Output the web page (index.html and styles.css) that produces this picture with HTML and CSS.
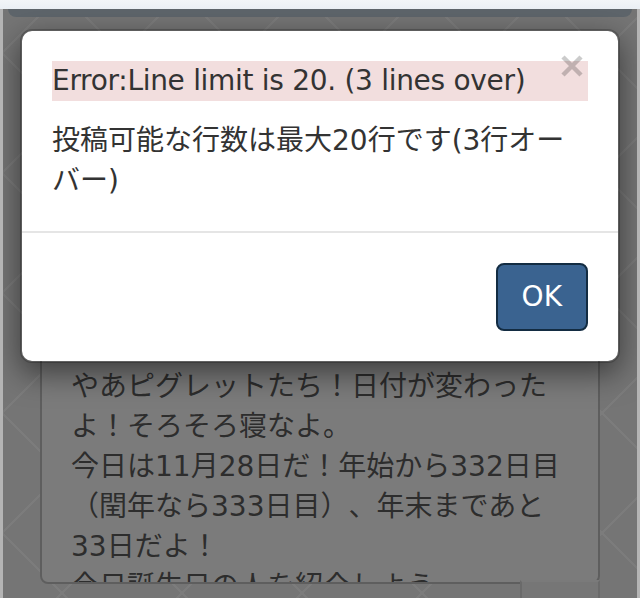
FILE: index.html
```html
<!DOCTYPE html>
<html lang="ja">
<head>
<meta charset="utf-8">
<title>Error</title>
<link rel="stylesheet" href="styles.css">
</head>
<body>
<div class="topstrip"></div>
<div class="page">
  <div class="navtail"></div>
  <main class="content">
    <div class="editor">
      <div class="textarea">やあピグレットたち！日付が変わったよ！そろそろ寝なよ。<br>今日は11月28日だ！年始から332日目（閏年なら333日目）、年末まであと33日だよ！<br>今日誕生日の人を紹介しよう</div>
      <div class="counter"></div>
    </div>
  </main>
  <div class="backdrop"></div>
  <div class="modal">
    <div class="modal-content">
      <div class="modal-header">
        <button class="close" type="button" aria-label="Close">
          <svg viewBox="0 0 22 22" width="22" height="22"><path d="M2 2L20 20M20 2L2 20" stroke="#000" stroke-width="4.5" fill="none"/></svg>
        </button>
        <div class="title">Error:Line limit is 20. (3 lines over)</div>
      </div>
      <div class="modal-body">投稿可能な行数は最大20行です(3行オーバー)</div>
      <div class="modal-footer"><button class="btn" type="button">OK</button></div>
    </div>
  </div>
</div>
</body>
</html>
```
FILE: styles.css
```css
html, body {
  margin: 0;
  padding: 0;
  height: 100%;
}
body {
  display: flex;
  flex-direction: column;
  font-family: "DejaVu Sans", "Noto Sans CJK JP", sans-serif;
  color: #333;
  overflow: hidden;
  text-spacing-trim: space-all;
}
.topstrip {
  height: 9px;
  flex: none;
  background: linear-gradient(#f2f5f8, #eaeff4);
}
.page {
  flex: 1;
  position: relative;
  overflow: hidden;
  border-left: 3px solid #b4b4b4;
  border-right: 3px solid #b4b4b4;
  background-color: #ebebeb;
  background-image:
    linear-gradient(45deg, transparent calc(50% - 1px), #f8f8f8 calc(50% - 1px), #f8f8f8 calc(50% + 1px), transparent calc(50% + 1px)),
    linear-gradient(135deg, transparent calc(50% - 1px), #f8f8f8 calc(50% - 1px), #f8f8f8 calc(50% + 1px), transparent calc(50% + 1px));
  background-size: 120px 120px;
  background-position: 59px 104px;
}
.navtail {
  height: 8px;
  margin: 0 5px;
  background: #bccbd7;
  border-radius: 0 0 8px 8px;
}
.content {
  margin: 316px 37px 0;
}
.textarea {
  height: 215px;
  padding: 32px 28px 0 29px;
  border: 2px solid #bdbdbd;
  border-radius: 8px;
  background: #f7f7f7;
  color: #5a5a5a;
  font-size: 28px;
  line-height: 40px;
  overflow: hidden;
}
.counter {
  width: 76px;
  height: 40px;
  margin: -4px 0 0 auto;
  border: 2px solid #d4d4d4;
  border-top-color: #f4f4f4;
  background: #ececec;
  position: relative;
}
.backdrop {
  position: absolute;
  inset: 0;
  background: rgba(0, 0, 0, 0.5);
}
.modal {
  position: absolute;
  top: 20px;
  left: 17px;
  width: 600px;
}
.modal-content {
  background: #fff;
  background-clip: padding-box;
  border: 2px solid rgba(0, 0, 0, 0.2);
  border-radius: 12px;
  box-shadow: 0 10px 30px rgba(0, 0, 0, 0.5);
}
.modal-header {
  padding: 30px 30px 0;
}
.close {
  float: right;
  width: 22px;
  height: 22px;
  margin: -6px 5px 0 0;
  padding: 0;
  border: 0;
  background: none;
  opacity: 0.2;
}
.close svg {
  display: block;
}
.title {
  background: #f2dede;
  font-size: 28px;
  line-height: 40px;
  letter-spacing: -0.3px;
  color: #333;
}
.modal-body {
  padding: 20px 30px 30px;
  font-size: 28px;
  line-height: 40px;
}
.modal-footer {
  border-top: 2px solid #e5e5e5;
  padding: 30px;
  text-align: right;
}
.btn {
  font-family: inherit;
  font-size: 28px;
  line-height: 40px;
  padding: 12px 24px;
  border: 2px solid #132c42;
  border-radius: 8px;
  background: #3a6390;
  color: #fff;
  display: inline-block;
  margin: 0;
}
```
